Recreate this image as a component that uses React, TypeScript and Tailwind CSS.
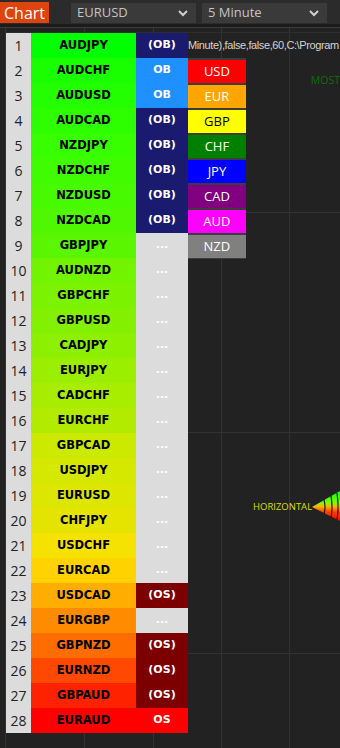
import React from "react";

type Row = { pair: string; status: string; color: string };

const rows: Row[] = [
  { pair: "AUDJPY", status: "(OB)", color: "#00ff00" },
  { pair: "AUDCHF", status: "OB", color: "#1aff00" },
  { pair: "AUDUSD", status: "OB", color: "#24ff00" },
  { pair: "AUDCAD", status: "(OB)", color: "#2eff00" },
  { pair: "NZDJPY", status: "(OB)", color: "#38ff00" },
  { pair: "NZDCHF", status: "(OB)", color: "#40fc00" },
  { pair: "NZDUSD", status: "(OB)", color: "#48fa00" },
  { pair: "NZDCAD", status: "(OB)", color: "#50f800" },
  { pair: "GBPJPY", status: "...", color: "#5af600" },
  { pair: "AUDNZD", status: "...", color: "#72f400" },
  { pair: "GBPCHF", status: "...", color: "#7af200" },
  { pair: "GBPUSD", status: "...", color: "#82f000" },
  { pair: "CADJPY", status: "...", color: "#8cf000" },
  { pair: "EURJPY", status: "...", color: "#9cee00" },
  { pair: "CADCHF", status: "...", color: "#a8ec00" },
  { pair: "EURCHF", status: "...", color: "#b2ea00" },
  { pair: "GBPCAD", status: "...", color: "#ccea00" },
  { pair: "USDJPY", status: "...", color: "#d4e800" },
  { pair: "EURUSD", status: "...", color: "#dce600" },
  { pair: "CHFJPY", status: "...", color: "#e4e400" },
  { pair: "USDCHF", status: "...", color: "#f6e200" },
  { pair: "EURCAD", status: "...", color: "#ffd200" },
  { pair: "USDCAD", status: "(OS)", color: "#ffae00" },
  { pair: "EURGBP", status: "...", color: "#ff8c00" },
  { pair: "GBPNZD", status: "(OS)", color: "#ff6c00" },
  { pair: "EURNZD", status: "(OS)", color: "#ff4800" },
  { pair: "GBPAUD", status: "(OS)", color: "#ff2200" },
  { pair: "EURAUD", status: "OS", color: "#ff0000" },
];

const statusClass: Record<string, string> = {
  "(OB)": "bg-[#1a1a6e]",
  OB: "bg-[#1e90ff]",
  "...": "bg-[#dcdcdc]",
  "(OS)": "bg-[#7d0000]",
  OS: "bg-[#ff0000]",
};

const legend = [
  { name: "USD", cls: "bg-[#ff0000] text-white" },
  { name: "EUR", cls: "bg-[#ffa500] text-white" },
  { name: "GBP", cls: "bg-[#ffff00] text-black" },
  { name: "CHF", cls: "bg-[#008000] text-white" },
  { name: "JPY", cls: "bg-[#0000ff] text-white" },
  { name: "CAD", cls: "bg-[#800080] text-white" },
  { name: "AUD", cls: "bg-[#ff00ff] text-white" },
  { name: "NZD", cls: "bg-[#808080] text-white" },
];

function Chevron() {
  return (
    <svg width="10" height="7" viewBox="0 0 10 7" className="shrink-0">
      <polyline points="1,1 5,5 9,1" fill="none" stroke="#d0d0d0" strokeWidth="2" />
    </svg>
  );
}

function Dropdown({ label }: { label: string }) {
  return (
    <div className="flex h-[20px] w-[125px] items-center justify-between bg-[#3a3a3a] pl-[6px] pr-[8px] text-[13px] text-[#c4c4c4]">
      <span>{label}</span>
      <Chevron />
    </div>
  );
}

function Fan() {
  return (
    <svg width="30" height="36" viewBox="0 0 30 36" className="shrink-0">
      <defs>
        <linearGradient id="fan" x1="0" y1="0" x2="0" y2="1">
          <stop offset="0" stopColor="#00ff00" />
          <stop offset="0.4" stopColor="#7fff00" />
          <stop offset="0.52" stopColor="#ffb000" />
          <stop offset="0.7" stopColor="#ff4000" />
          <stop offset="1" stopColor="#ff0000" />
        </linearGradient>
      </defs>
      <polygon points="0,19 28,3 30,3 30,33 28,33" fill="url(#fan)" />
      <path d="M12,12 Q14,19 12,26" fill="none" stroke="#1a1a1a" strokeWidth="1.2" />
      <path d="M19,8 Q21,19 19,30" fill="none" stroke="#1a1a1a" strokeWidth="1.2" />
      <path d="M25,5 Q27,19 25,32" fill="none" stroke="#1a1a1a" strokeWidth="1.2" />
    </svg>
  );
}

export default function App() {
  return (
    <div className="flex h-[748px] w-[340px] flex-col overflow-hidden bg-[#222222] font-['Open_Sans',sans-serif]">
      <header className="flex h-[24px] items-start gap-[22px] bg-[#2b2b2b] pt-[2px]">
        <div className="flex h-[21px] w-[49px] items-center justify-center bg-[#df440e] text-[16px] leading-none text-white">
          Chart
        </div>
        <div className="flex gap-[6px] pt-[1px]">
          <Dropdown label="EURUSD" />
          <Dropdown label="5 Minute" />
        </div>
      </header>
      <div className="h-[3px] bg-[#1b1b1b]" />
      <div className="h-px bg-[#3c3c3c]" />

      <main className="relative flex flex-1 items-start pl-[6px] pt-[5px]">
        {/* chart grid, vertical */}
        <div className="absolute inset-0 flex pl-[5px]">
          <div className="w-[79px] border-l border-[#333]" />
          <div className="w-[69px] border-l border-[#333]" />
          <div className="w-[68px] border-l border-[#333]" />
          <div className="w-[68px] border-l border-[#333]" />
          <div className="flex-1 border-l border-[#333]" />
        </div>
        {/* chart grid, horizontal */}
        <div className="absolute inset-0 flex flex-col pl-[5px] pt-[4px]">
          <div className="h-[180px] border-t border-[#2e2e2e]" />
          <div className="h-[220px] border-t border-[#333]" />
          <div className="h-[221px] border-t border-[#333]" />
          <div className="flex-1 border-t border-[#333]" />
        </div>

        {/* chart label on the canvas */}
        <div className="absolute left-[253px] top-[460px] flex items-center">
          <span className="mt-px whitespace-nowrap text-[9.5px] leading-[14px] text-[#dede00]">HORIZONTAL</span>
          <Fan />
        </div>

        {/* strength table */}
        <div className="relative flex w-[182px] flex-col">
          {rows.map((r, i) => (
            <div key={r.pair} className="flex h-[25px]">
              <div className="flex w-[25px] items-center justify-center bg-[#dcdcdc] text-[14px] text-[#222]">
                {i + 1}
              </div>
              <div
                className="flex w-[105px] items-center justify-center font-['DejaVu_Sans',sans-serif] text-[11.5px] font-bold text-black"
                style={{ backgroundColor: r.color }}
              >
                {r.pair}
              </div>
              <div
                className={`flex w-[52px] items-center justify-center font-['DejaVu_Sans',sans-serif] text-[11px] font-bold text-white ${statusClass[r.status]}`}
              >
                {r.status}
              </div>
            </div>
          ))}
        </div>

        {/* right side: caption, legend */}
        <div className="relative flex min-w-0 flex-1 flex-col">
          <div className="flex h-[25px] items-center whitespace-nowrap font-['Liberation_Sans',sans-serif] text-[11px] tracking-[-0.4px] text-[#d4d4d4]">
            <span>Minute),false,false,60,C:\Program</span>
          </div>
          <div className="flex items-start">
            <div className="w-[60px] border-b border-[#3c3c3c]">
              {legend.map((c) => (
                <div
                  key={c.name}
                  className={`flex h-[25px] items-center justify-center border-t-2 border-[#3c3c3c] text-[13px] ${c.cls}`}
                >
                  {c.name}
                </div>
              ))}
            </div>
            <div className="ml-[65px] mt-[15px] text-[10.5px] leading-[14px] text-[#0b6e0b]">MOST</div>
          </div>
        </div>
      </main>
    </div>
  );
}
